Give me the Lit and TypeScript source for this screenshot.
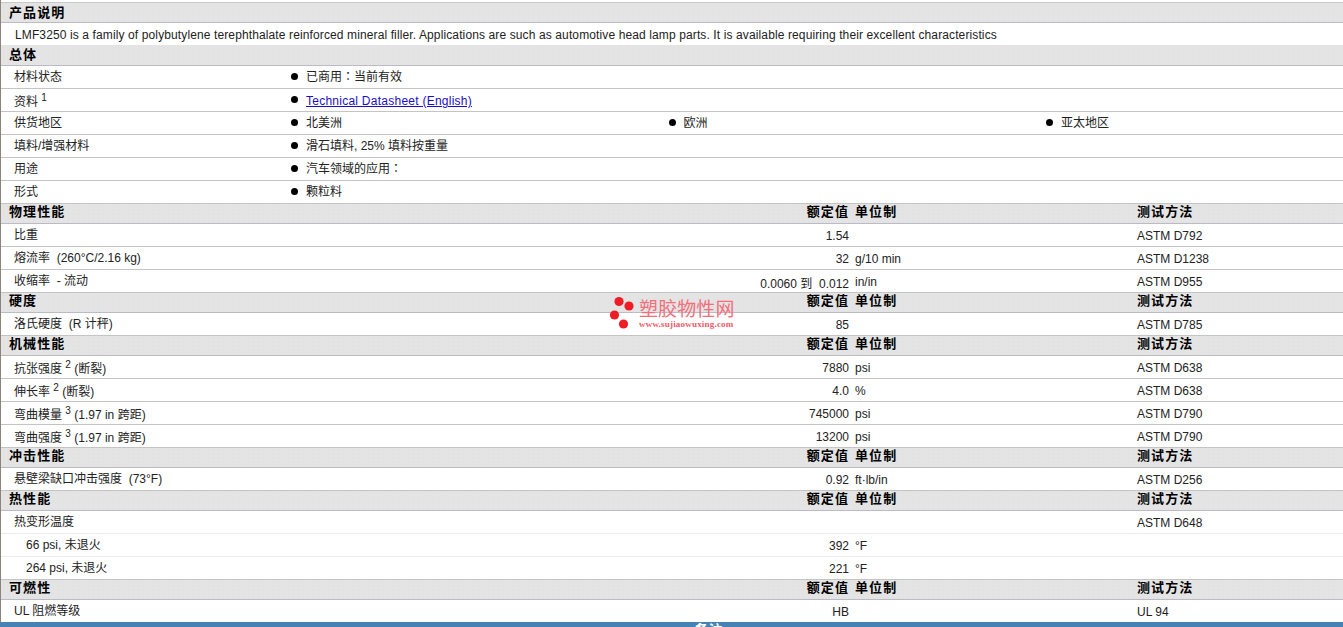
import { LitElement, html, css } from "lit";
import { customElement } from "lit/decorators.js";

type Row = { n: unknown; v?: string; u?: string; t?: string; sub?: boolean; soft?: boolean; raised?: boolean };
type Section = { title: string; rows: Row[] };

const sup = (label: string, s: string, rest = "") =>
  html`${label} <sup>${s}</sup>${rest ? html` ${rest}` : ""}`;

const sections: Section[] = [
  { title: "物理性能", rows: [
    { n: "比重", v: "1.54", t: "ASTM D792" },
    { n: "熔流率  (260°C/2.16 kg)", v: "32", u: "g/10 min", t: "ASTM D1238" },
    { n: "收缩率  - 流动", v: "0.0060 到  0.012", u: "in/in", t: "ASTM D955" },
  ]},
  { title: "硬度", rows: [
    { n: "洛氏硬度  (R 计秤)", v: "85", t: "ASTM D785" },
  ]},
  { title: "机械性能", rows: [
    { n: sup("抗张强度", "2", "(断裂)"), v: "7880", u: "psi", t: "ASTM D638", raised: true },
    { n: sup("伸长率", "2", "(断裂)"), v: "4.0", u: "%", t: "ASTM D638", raised: true },
    { n: sup("弯曲模量", "3", "(1.97 in 跨距)"), v: "745000", u: "psi", t: "ASTM D790", raised: true },
    { n: sup("弯曲强度", "3", "(1.97 in 跨距)"), v: "13200", u: "psi", t: "ASTM D790", raised: true },
  ]},
  { title: "冲击性能", rows: [
    { n: "悬壁梁缺口冲击强度  (73°F)", v: "0.92", u: "ft·lb/in", t: "ASTM D256" },
  ]},
  { title: "热性能", rows: [
    { n: "热变形温度", t: "ASTM D648", soft: true },
    { n: "66 psi, 未退火", v: "392", u: "°F", sub: true, soft: true },
    { n: "264 psi, 未退火", v: "221", u: "°F", sub: true },
  ]},
  { title: "可燃性", rows: [
    { n: "UL 阻燃等级", v: "HB", t: "UL 94" },
  ]},
];

const colon = html`<span class="punct">：</span>`;

const general: { n: unknown; raised?: boolean; items: unknown[] }[] = [
  { n: "材料状态", items: [html`已商用${colon}当前有效`] },
  { n: sup("资料", "1"), raised: true, items: [html`<a href="#">Technical Datasheet (English)</a>`] },
  { n: "供货地区", items: ["北美洲", "欧洲", "亚太地区"] },
  { n: "填料/增强材料", items: ["滑石填料, 25% 填料按重量"] },
  { n: "用途", items: [html`汽车领域的应用${colon}`] },
  { n: "形式", items: ["颗粒料"] },
];

@customElement("app-root")
export class AppRoot extends LitElement {
  static styles = css`
    :host {
      display: block;
      height: 627px;
      overflow: hidden;
      position: relative;
      background: #fff;
      font-family: "Liberation Sans", "Noto Sans CJK SC", sans-serif;
      font-size: 12px;
      color: #222;
    }
    .page {
      padding-top: 2px;
      box-sizing: border-box;
      height: 622px;
      border-left: 1px solid #8a857b;
    }
    .head {
      display: grid;
      grid-template-columns: 285px 563px 288px 1fr;
      align-items: start;
      height: 20px;
      box-sizing: border-box;
      background-color: #e4e4e4;
      background-image: radial-gradient(circle, #e1e1e1 0.6px, transparent 0.8px);
      background-size: 5px 4px;
      border-bottom: 1px solid #bcbac6;
      font-size: 13px;
      line-height: 16px;
      font-weight: 700;
      letter-spacing: 1.1px;
      color: #000;
      white-space: nowrap;
    }
    .head.first {
      height: 21px;
      padding-top: 2px;
      border-top: 1px solid #c8c8c8;
    }
    .head.tall { height: 21px; padding-top: 2px; }
    .head .title { padding-left: 8px; }
    .head .rate { text-align: right; }
    .head .unit { padding-left: 6px; }
    .desc {
      height: 22px;
      line-height: 25px;
      padding-left: 14px;
      white-space: nowrap;
      letter-spacing: 0.118px;
    }
    .row {
      display: grid;
      grid-template-columns: 285px 563px 288px 1fr;
      align-items: center;
      height: 23px;
      box-sizing: border-box;
      border-bottom: 1px solid #c4c4c4;
      white-space: nowrap;
    }
    .row.soft { border-bottom-color: #ececec; }
    .row.last { border-bottom: none; height: 22px; }
    .row .name { padding-left: 13px; padding-bottom: 4px; white-space: pre; }
    .row.raised .name { padding-bottom: 0; }
    .row.sub .name { padding-left: 25px; padding-bottom: 3px; }
    .row .val, .row .unit, .row .test { padding-top: 2px; }
    .row .val { text-align: right; white-space: pre; }
    .row .unit { padding-left: 6px; }
    .gen {
      display: grid;
      grid-template-columns: 285px 377.5px 377.5px 1fr;
      align-items: center;
      height: 23px;
      box-sizing: border-box;
      border-bottom: 1px solid #c4c4c4;
      white-space: nowrap;
    }
    .gen .name { padding-left: 13px; padding-bottom: 4px; }
    .gen.raised .name { padding-bottom: 0; }
    .item { display: flex; align-items: center; gap: 8px; padding-left: 5px; }
    .item .txt { padding-bottom: 4px; }
    .gen.raised .txt { padding-bottom: 0; padding-top: 2px; letter-spacing: 0.25px; }
    .dot { width: 7px; height: 7px; border-radius: 50%; background: #000; margin-bottom: 1px; }
    .punct { font-family: "Noto Sans CJK TC", sans-serif; }
    sup { font-size: 10px; line-height: 0; vertical-align: 5px; }
    a { color: #1a0dcc; }
    .bar {
      height: 24px;
      background: #4682b4;
      color: #fff;
      font-size: 14px;
      font-weight: 700;
      text-align: center;
      line-height: 16px;
      padding-left: 74px;
      box-sizing: border-box;
    }
    .mark {
      position: absolute;
      left: 608px;
      top: 294px;
      width: 134px;
      height: 40px;
      pointer-events: none;
    }
    .mark svg { position: absolute; left: 0; top: 0; }
    .mark .cn {
      position: absolute;
      left: 31px;
      top: 5px;
      font-size: 19px;
      line-height: 22px;
      color: #f2707c;
      white-space: nowrap;
      letter-spacing: 0.1px;
    }
    .mark .en {
      position: absolute;
      left: 31px;
      top: 25px;
      font-family: "Liberation Serif", serif;
      font-size: 9px;
      font-weight: 700;
      letter-spacing: 0.2px;
      line-height: 11px;
      color: #ee5a68;
      white-space: nowrap;
    }
  `;

  private renderSection(s: Section, i: number) {
    return html`
      <div class="head">
        <div class="title">${s.title}</div>
        <div class="rate">额定值</div>
        <div class="unit">单位制</div>
        <div>测试方法</div>
      </div>
      ${s.rows.map((r, j) => html`
        <div class="row ${r.sub ? "sub" : ""} ${r.soft ? "soft" : ""} ${r.raised ? "raised" : ""} ${i === sections.length - 1 && j === s.rows.length - 1 ? "last" : ""}">
          <div class="name">${r.n}</div>
          <div class="val">${r.v ?? ""}</div>
          <div class="unit">${r.u ?? ""}</div>
          <div class="test">${r.t ?? ""}</div>
        </div>`)}
    `;
  }

  render() {
    return html`
      <div class="page">
        <div class="head first"><div class="title">产品说明</div></div>
        <div class="desc">LMF3250 is a family of polybutylene terephthalate reinforced mineral filler. Applications are such as automotive head lamp parts. It is available requiring their excellent characteristics</div>
        <div class="head tall"><div class="title">总体</div></div>
        ${general.map((g) => html`
          <div class="gen ${g.raised ? "raised" : ""}">
            <div class="name">${g.n}</div>
            ${g.items.map((it) => html`<div class="item"><span class="dot"></span><span class="txt">${it}</span></div>`)}
          </div>`)}
        ${sections.map((s, i) => this.renderSection(s, i))}
      </div>
      <div class="bar">备注</div>
      <div class="mark">
        <svg width="30" height="40" viewBox="0 0 30 40">
          <circle cx="11" cy="7.5" r="4.6" fill="#ee1c25"></circle>
          <circle cx="21" cy="12" r="4.6" fill="#ee1c25"></circle>
          <circle cx="6.5" cy="21" r="4.6" fill="#ee1c25"></circle>
          <circle cx="15.5" cy="30" r="4.6" fill="#ee1c25"></circle>
        </svg>
        <div class="cn">塑胶物性网</div>
        <div class="en">www.sujiaowuxing.com</div>
      </div>
    `;
  }
}
